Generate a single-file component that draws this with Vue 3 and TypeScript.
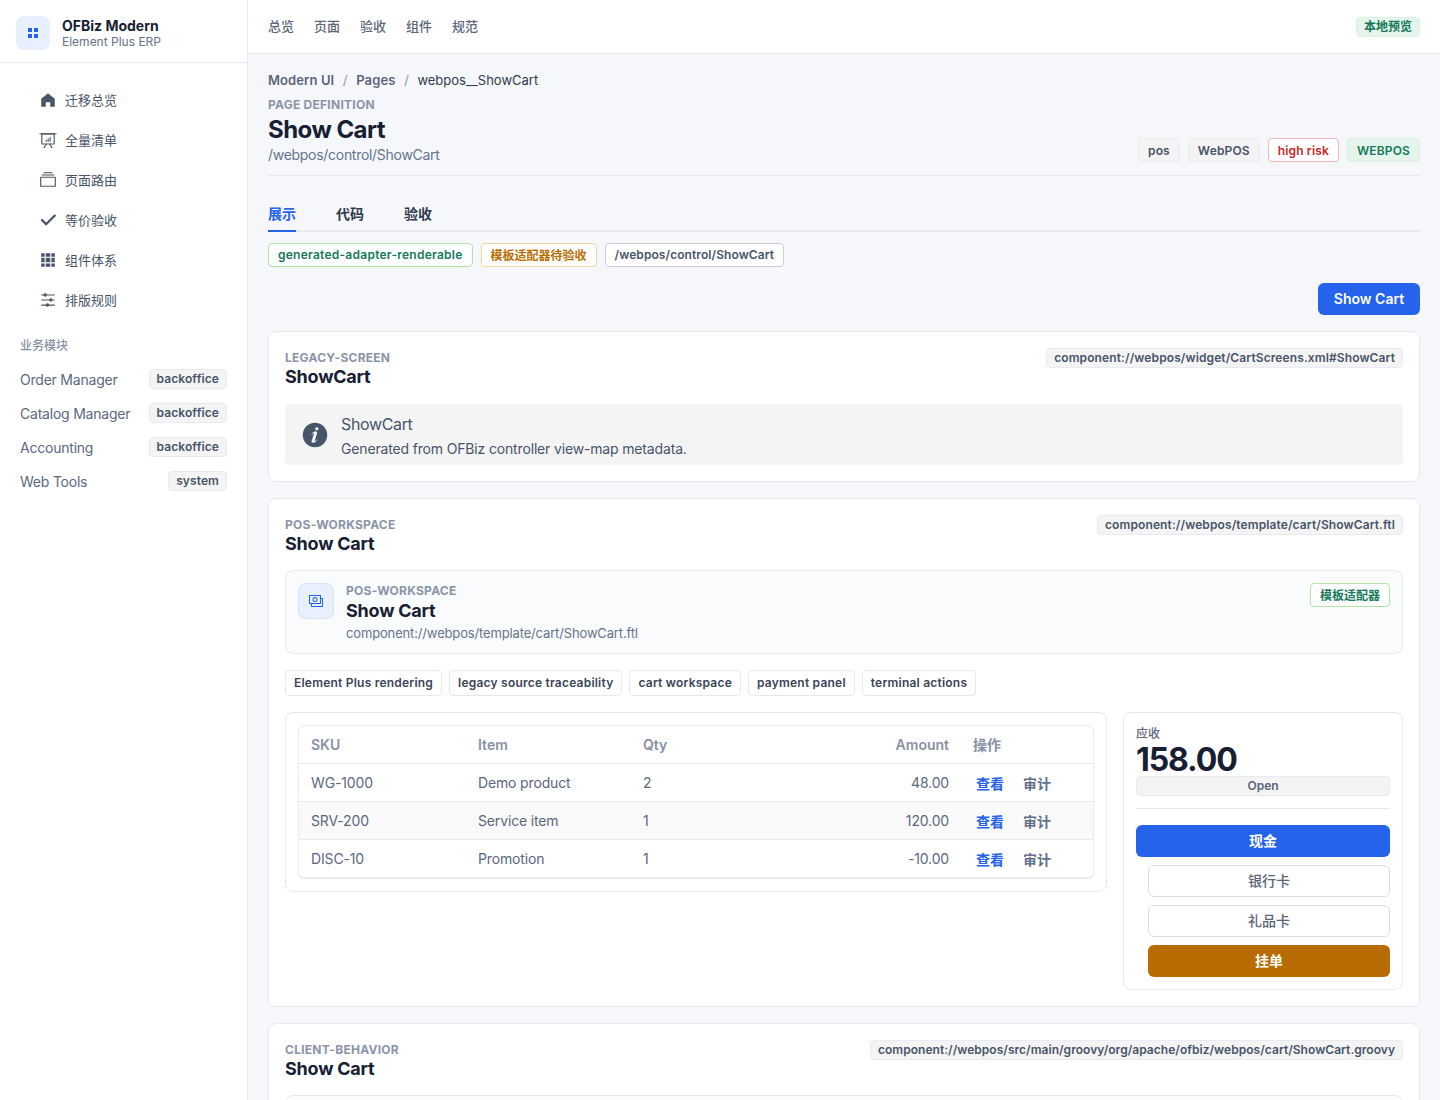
<template>
  <div class="layout">
    <aside class="sidebar">
      <div class="brand">
        <div class="brand-mark">
          <svg viewBox="0 0 12 12" width="12" height="12"><path d="M1 1h4v4H1zM7 1h4v4H7zM1 7h4v4H1zM7 7h4v4H7z" fill="#2563eb" /></svg>
        </div>
        <div>
          <div class="brand-name">OFBiz Modern</div>
          <div class="brand-sub">Element Plus ERP</div>
        </div>
      </div>
      <nav class="menu">
        <a v-for="item in menu" :key="item.label" class="menu-item">
          <svg viewBox="0 0 1024 1024" width="18" height="18" fill="currentColor" :stroke="item.bold ? 'currentColor' : 'none'" :stroke-width="item.bold ? 60 : 0">
            <path v-for="d in item.paths" :key="d" :d="d" />
          </svg>
          <span class="cjk-text">{{ item.label }}</span>
        </a>
      </nav>
      <div class="module-title">业务模块</div>
      <div class="modules">
        <div v-for="mod in modules" :key="mod.name" class="module-row">
          <span class="module-name">{{ mod.name }}</span>
          <span class="module-tag">{{ mod.tag }}</span>
        </div>
      </div>
    </aside>

    <div class="content">
      <header class="topbar">
        <div class="topnav">
          <a v-for="link in topLinks" :key="link" class="cjk-text">{{ link }}</a>
        </div>
        <span class="tag tag-green preview">本地预览</span>
      </header>

      <main class="main">
        <div class="breadcrumb">
          <b>Modern UI</b><i>/</i><b>Pages</b><i>/</i><span>webpos__ShowCart</span>
        </div>
        <div class="page-head">
          <div>
            <div class="eyebrow">PAGE DEFINITION</div>
            <h1>Show Cart</h1>
            <div class="page-path">/webpos/control/ShowCart</div>
          </div>
          <div class="head-tags">
            <span class="tag tag-gray">pos</span>
            <span class="tag tag-gray">WebPOS</span>
            <span class="tag tag-red">high risk</span>
            <span class="tag tag-green">WEBPOS</span>
          </div>
        </div>

        <div class="tabs">
          <a v-for="(tab, i) in tabs" :key="tab" class="tab" :class="{ active: i === 0 }">{{ tab }}</a>
        </div>

        <div class="status-tags">
          <span class="tag status status-green wide">generated-adapter-renderable</span>
          <span class="tag status status-orange">模板适配器待验收</span>
          <span class="tag status status-gray">/webpos/control/ShowCart</span>
        </div>

        <div class="actions">
          <button class="btn btn-primary show-cart">Show Cart</button>
        </div>

        <section class="card">
          <div class="card-head">
            <div>
              <div class="eyebrow">LEGACY-SCREEN</div>
              <h2>ShowCart</h2>
            </div>
            <span class="chip">component://webpos/widget/CartScreens.xml#ShowCart</span>
          </div>
          <div class="alert">
            <svg viewBox="0 0 1024 1024" width="28" height="28" fill="#475569"><path :d="infoPath" /></svg>
            <div class="alert-body">
              <div class="alert-title">ShowCart</div>
              <div class="alert-desc">Generated from OFBiz controller view-map metadata.</div>
            </div>
          </div>
        </section>

        <section class="card">
          <div class="card-head">
            <div>
              <div class="eyebrow">POS-WORKSPACE</div>
              <h2>Show Cart</h2>
            </div>
            <span class="chip">component://webpos/template/cart/ShowCart.ftl</span>
          </div>

          <div class="adapter">
            <div class="adapter-icon">
              <svg viewBox="0 0 1024 1024" width="16" height="16" fill="#2563eb">
                <path v-for="d in moneyPaths" :key="d" :d="d" />
              </svg>
            </div>
            <div class="adapter-text">
              <div class="eyebrow">POS-WORKSPACE</div>
              <div class="adapter-title">Show Cart</div>
              <div class="adapter-path">component://webpos/template/cart/ShowCart.ftl</div>
            </div>
            <span class="tag status status-green adapter-tag">模板适配器</span>
          </div>

          <div class="features">
            <span v-for="f in features" :key="f" class="feature">{{ f }}</span>
          </div>

          <div class="workspace">
            <div class="table-panel">
              <table class="cart-table">
                <colgroup>
                  <col style="width: 167px" />
                  <col style="width: 165px" />
                  <col />
                  <col />
                  <col style="width: 132px" />
                </colgroup>
                <thead>
                  <tr>
                    <th>SKU</th>
                    <th>Item</th>
                    <th>Qty</th>
                    <th class="num">Amount</th>
                    <th><span class="cjk-text">操作</span></th>
                  </tr>
                </thead>
                <tbody>
                  <tr v-for="row in rows" :key="row.sku">
                    <td>{{ row.sku }}</td>
                    <td>{{ row.item }}</td>
                    <td>{{ row.qty }}</td>
                    <td class="num">{{ row.amount }}</td>
                    <td class="ops"><a class="op-view">查看</a><a class="op-audit">审计</a></td>
                  </tr>
                </tbody>
              </table>
            </div>

            <div class="pay-panel">
              <div class="pay-label">应收</div>
              <div class="pay-total">158.00</div>
              <div class="pay-status">Open</div>
              <div class="pay-divider"></div>
              <div class="pay-buttons">
                <button class="btn btn-primary">现金</button>
                <button class="btn btn-plain indent">银行卡</button>
                <button class="btn btn-plain indent">礼品卡</button>
                <button class="btn btn-warn indent">挂单</button>
              </div>
            </div>
          </div>
        </section>

        <section class="card">
          <div class="card-head">
            <div>
              <div class="eyebrow">CLIENT-BEHAVIOR</div>
              <h2>Show Cart</h2>
            </div>
            <span class="chip chip-tight">component://webpos/src/main/groovy/org/apache/ofbiz/webpos/cart/ShowCart.groovy</span>
          </div>
          <div class="adapter behavior"></div>
        </section>
      </main>
    </div>
  </div>
</template>

<script setup lang="ts">
const menu = [
  { label: '迁移总览', paths: ['M512 128 128 447.936V896h255.936V640H640v256h255.936V447.936z'] },
  {
    label: '全量清单',
    paths: [
      'M32 128h960v64H32z',
      'M192 192v512h640V192zm-64-64h768v576a64 64 0 0 1-64 64H192a64 64 0 0 1-64-64z',
      'M322.176 960H248.32l144.64-250.56 55.424 32zm453.888 0h-73.856L576 741.44l55.424-32z',
      'M380 500h64v110h-64zM490 430h64v180h-64zM600 340h64v270h-64z',
    ],
  },
  {
    label: '页面路由',
    paths: ['M128 384v448h768V384zm-32-64h832a32 32 0 0 1 32 32v512a32 32 0 0 1-32 32H96a32 32 0 0 1-32-32V352a32 32 0 0 1 32-32m64-128h704v64H160zm96-128h512v64H256z'],
  },
  {
    label: '等价验收',
    bold: true,
    paths: ['M406.656 706.944 195.84 496.256a32 32 0 1 0-45.248 45.248l256 256 512-512a32 32 0 1 0-45.248-45.248L406.592 706.944z'],
  },
  {
    label: '组件体系',
    paths: ['M640 384v256H384V384zm64 0h192v256H704zm-64 512H384V704h256zm64 0V704h192v192zm-64-768v192H384V128zm64 0h192v192H704zM320 384v256H128V384zm0 512H128V704h192zm0-768v192H128V128z'],
  },
  {
    label: '排版规则',
    paths: ['M389.44 768a96.064 96.064 0 0 1 181.12 0H896v64H570.56a96.064 96.064 0 0 1-181.12 0H128v-64zm192-288a96.064 96.064 0 0 1 181.12 0H896v64H762.56a96.064 96.064 0 0 1-181.12 0H128v-64zm-320-288a96.064 96.064 0 0 1 181.12 0H896v64H442.56a96.064 96.064 0 0 1-181.12 0H128v-64z'],
  },
]

const modules = [
  { name: 'Order Manager', tag: 'backoffice' },
  { name: 'Catalog Manager', tag: 'backoffice' },
  { name: 'Accounting', tag: 'backoffice' },
  { name: 'Web Tools', tag: 'system' },
]

const topLinks = ['总览', '页面', '验收', '组件', '规范']
const tabs = ['展示', '代码', '验收']
const features = ['Element Plus rendering', 'legacy source traceability', 'cart workspace', 'payment panel', 'terminal actions']

const rows = [
  { sku: 'WG-1000', item: 'Demo product', qty: 2, amount: '48.00' },
  { sku: 'SRV-200', item: 'Service item', qty: 1, amount: '120.00' },
  { sku: 'DISC-10', item: 'Promotion', qty: 1, amount: '-10.00' },
]

const infoPath =
  'M512 64a448 448 0 1 1 0 896.064A448 448 0 0 1 512 64m67.2 275.072c33.28 0 60.288-23.104 60.288-57.344s-27.072-57.344-60.288-57.344c-33.28 0-60.16 23.104-60.16 57.344s26.88 57.344 60.16 57.344M590.912 699.2c0-6.848 2.368-24.64 1.024-34.752l-52.608 60.544c-10.88 11.456-24.512 19.392-30.912 17.28a12.992 12.992 0 0 1-8.256-14.72l87.68-276.992c7.168-35.136-12.544-67.2-54.336-71.296-44.096 0-108.992 44.736-148.48 101.504 0 6.784-1.28 23.68.064 33.792l52.544-60.608c10.88-11.328 23.552-19.328 29.952-17.152a12.8 12.8 0 0 1 7.808 16.128L388.48 728.576c-10.048 30.72 8.96 60.8 55.104 67.968 67.84 0 107.904-43.648 147.456-100.416z'

const moneyPaths = [
  'M256 640v192h640V384H768v-64h150.976c14.272 0 19.456 1.472 24.64 4.288a29.056 29.056 0 0 1 12.16 12.096c2.752 5.184 4.224 10.368 4.224 24.64v493.952c0 14.272-1.472 19.456-4.288 24.64a29.056 29.056 0 0 1-12.096 12.16c-5.184 2.752-10.368 4.224-24.64 4.224H233.024c-14.272 0-19.456-1.472-24.64-4.288a29.056 29.056 0 0 1-12.16-12.096c-2.688-5.184-4.224-10.368-4.224-24.576V640z',
  'M768 192H128v448h640zm64-22.976v493.952c0 14.272-1.472 19.456-4.288 24.64a29.056 29.056 0 0 1-12.096 12.16c-5.184 2.752-10.368 4.224-24.64 4.224H105.024c-14.272 0-19.456-1.472-24.64-4.288a29.056 29.056 0 0 1-12.16-12.096C65.536 682.432 64 677.248 64 663.04V169.024c0-14.272 1.472-19.456 4.288-24.64a29.056 29.056 0 0 1 12.096-12.16C85.568 129.536 90.752 128 104.96 128h685.952c14.272 0 19.456 1.472 24.64 4.288a29.056 29.056 0 0 1 12.16 12.096c2.752 5.184 4.224 10.368 4.224 24.64z',
  'M448 576a160 160 0 1 1 0-320 160 160 0 0 1 0 320m0-64a96 96 0 1 0 0-192 96 96 0 0 0 0 192',
]
</script>

<style>
html,
body {
  margin: 0;
  background: #f6f7fb;
}
</style>

<style scoped>
.layout {
  display: flex;
  height: 1100px;
  overflow: hidden;
  font-family: Inter, "Noto Sans CJK SC", sans-serif;
  color: #172033;
  background: #f6f7fb;
}

.cjk-text {
  display: block;
  padding-bottom: 2px;
}

/* sidebar */
.sidebar {
  width: 248px;
  flex-shrink: 0;
  box-sizing: border-box;
  background: #fff;
  border-right: 1px solid #e6e9f0;
}

.brand {
  display: flex;
  align-items: center;
  gap: 12px;
  height: 63px;
  box-sizing: border-box;
  padding: 4px 16px 0;
  border-bottom: 1px solid #e6e9f0;
}

.brand-mark {
  width: 34px;
  height: 34px;
  display: flex;
  align-items: center;
  justify-content: center;
  border-radius: 8px;
  background: #e8effe;
}

.brand-name {
  font-size: 14px;
  line-height: 18px;
  font-weight: 700;
}

.brand-sub {
  font-size: 12px;
  line-height: 14px;
  color: #64748b;
}

.menu {
  padding-top: 17px;
}

.menu-item {
  display: flex;
  align-items: center;
  gap: 8px;
  height: 40px;
  padding-left: 39px;
  font-size: 13px;
  color: #475569;
}

.module-title {
  margin-top: 17px;
  padding-left: 20px;
  font-size: 12px;
  line-height: 18px;
  font-weight: 500;
  color: #8791a5;
}

.modules {
  margin-top: 7px;
  padding: 0 20px;
}

.module-row {
  display: flex;
  align-items: center;
  justify-content: space-between;
  height: 34px;
  font-size: 14px;
  color: #5b6880;
}

.module-name {
  letter-spacing: -0.22px;
}

.module-tag {
  height: 20px;
  box-sizing: border-box;
  padding: 0 7px;
  border: 1px solid #e9ebf0;
  border-radius: 4px;
  background: #f4f4f5;
  font-size: 12px;
  line-height: 17px;
  font-weight: 600;
  letter-spacing: 0.1px;
  color: #475569;
}

/* top bar */
.content {
  flex: 1;
  min-width: 0;
}

.topbar {
  display: flex;
  align-items: center;
  justify-content: space-between;
  height: 54px;
  box-sizing: border-box;
  padding: 0 20px;
  background: #fff;
  border-bottom: 1px solid #e6e9f0;
}

.topnav {
  display: flex;
  gap: 20px;
  font-size: 13px;
  font-weight: 500;
  color: #5b6578;
}

.tag {
  display: inline-flex;
  align-items: center;
  box-sizing: border-box;
  height: 24px;
  padding: 0 9px;
  border: 1px solid transparent;
  border-radius: 4px;
  font-size: 12px;
  font-weight: 600;
  letter-spacing: 0.15px;
  white-space: nowrap;
}

.tag-gray {
  background: #f4f4f5;
  border-color: #e9ebf0;
  color: #475569;
}

.tag-green {
  background: #e6f5ec;
  border-color: #dcf0e3;
  color: #15795a;
}

.tag-red {
  background: #fff;
  border-color: #f8b4b4;
  color: #c62828;
}

.preview {
  height: 20px;
  padding: 0 7px 2px;
  letter-spacing: 0;
}

/* page header */
.main {
  padding: 0 20px;
}

.breadcrumb {
  display: flex;
  align-items: center;
  height: 20px;
  margin-top: 16px;
  font-size: 13px;
  color: #303a4d;
}

.breadcrumb b {
  font-weight: 600;
  letter-spacing: 0.1px;
  color: #5b6578;
}

.breadcrumb i {
  margin: 0 8.5px;
  font-style: normal;
  font-weight: 600;
  color: #a8afbd;
}

.eyebrow {
  font-size: 12px;
  line-height: 18px;
  font-weight: 700;
  letter-spacing: 0.25px;
  color: #8b95a8;
}

.page-head {
  display: flex;
  align-items: flex-end;
  justify-content: space-between;
  margin-top: 6px;
  padding-bottom: 11px;
  border-bottom: 1px solid #e6e9f0;
}

h1 {
  margin: 0;
  font-size: 24px;
  line-height: 32px;
  font-weight: 700;
  letter-spacing: -0.55px;
}

.page-path {
  font-size: 14px;
  line-height: 18px;
  letter-spacing: -0.29px;
  color: #64748b;
}

.head-tags {
  display: flex;
  gap: 8px;
  margin-bottom: 2px;
}

.tabs {
  display: flex;
  gap: 40px;
  margin-top: 22px;
  border-bottom: 2px solid #e6e9f0;
}

.tab {
  height: 32px;
  margin-bottom: -2px;
  border-bottom: 2px solid transparent;
  font-size: 14px;
  line-height: 32px;
  font-weight: 700;
  color: #303a4d;
}

.tab.active {
  color: #2563eb;
  border-bottom-color: #2563eb;
}

.status-tags {
  display: flex;
  gap: 8px;
  margin-top: 11px;
}

.status {
  padding-bottom: 2px;
  background: #fff;
}

.status.wide {
  letter-spacing: 0.25px;
}

.status-green {
  border-color: #b3e2a8;
  color: #15795a;
}

.status-orange {
  border-color: #f5d6a2;
  color: #b86e00;
  letter-spacing: 0;
}

.status-gray {
  border-color: #c9ced8;
  color: #475569;
  letter-spacing: 0.08px;
}

.actions {
  display: flex;
  justify-content: flex-end;
  margin: 16px 0;
}

.btn {
  height: 32px;
  padding: 0 0 2px;
  border: 1px solid transparent;
  border-radius: 6px;
  font-family: inherit;
  font-size: 14px;
  font-weight: 600;
  cursor: pointer;
}

.btn-primary {
  background: #2563eb;
  color: #fff;
}

.show-cart {
  width: 102px;
}

.btn-plain {
  background: #fff;
  border-color: #d9dce6;
  color: #5b6578;
  font-weight: 500;
}

.btn-warn {
  background: #b86b00;
  color: #fff;
}

/* cards */
.card {
  margin-bottom: 16px;
  padding: 16px;
  border: 1px solid #e6e9f0;
  border-radius: 8px;
  background: #fff;
}

.card-head {
  display: flex;
  align-items: flex-start;
  justify-content: space-between;
  margin-bottom: 16px;
}

.card-head .eyebrow {
  padding-top: 1px;
}

h2 {
  margin: 0;
  padding-bottom: 2px;
  font-size: 18px;
  line-height: 19px;
  font-weight: 700;
  letter-spacing: -0.22px;
}

.chip {
  height: 20px;
  box-sizing: border-box;
  padding: 0 7px;
  border: 1px solid #e9ebf0;
  border-radius: 4px;
  background: #f4f4f5;
  font-size: 12px;
  line-height: 18px;
  font-weight: 600;
  letter-spacing: 0.11px;
  color: #475569;
}

.chip-tight {
  letter-spacing: 0.04px;
}

.alert {
  display: flex;
  align-items: center;
  gap: 12px;
  height: 61px;
  padding: 0 16px;
  box-sizing: border-box;
  border-radius: 6px;
  background: #f4f4f5;
}

.alert-body {
  padding-top: 2px;
}

.alert-title {
  font-size: 16px;
  line-height: 24px;
  letter-spacing: -0.35px;
  color: #475569;
}

.alert-desc {
  font-size: 14px;
  line-height: 22px;
  margin-top: 2px;
  letter-spacing: -0.16px;
  color: #475569;
}

.adapter {
  display: flex;
  gap: 12px;
  margin-top: -1px;
  padding: 12px;
  border: 1px solid #e6e9f0;
  border-radius: 8px;
  background: #fafbfd;
}

.behavior {
  height: 80px;
}

.adapter-icon {
  width: 36px;
  height: 36px;
  box-sizing: border-box;
  display: flex;
  align-items: center;
  justify-content: center;
  border: 1px solid #d8e3fb;
  border-radius: 8px;
  background: #e8effe;
}

.adapter-text {
  flex: 1;
  padding-top: 1px;
}

.adapter-text .eyebrow {
  line-height: 14px;
}

.adapter-title {
  margin-top: 1px;
  font-size: 18px;
  line-height: 24px;
  font-weight: 700;
  letter-spacing: -0.22px;
}

.adapter-path {
  margin-top: 2px;
  font-size: 13px;
  line-height: 16px;
  letter-spacing: -0.15px;
  color: #64748b;
}

.features {
  display: flex;
  gap: 7px;
  margin: 16px 0;
}

.feature {
  height: 26px;
  box-sizing: border-box;
  padding: 0 8px;
  border: 1px solid #e6e9f0;
  border-radius: 4px;
  font-size: 12px;
  line-height: 24px;
  font-weight: 600;
  letter-spacing: 0.22px;
  color: #3a4558;
}

.workspace {
  display: grid;
  grid-template-columns: 1fr 280px;
  gap: 16px;
  align-items: start;
}

.table-panel {
  padding: 12px;
  border: 1px solid #e6e9f0;
  border-radius: 8px;
}

.cart-table {
  width: 100%;
  table-layout: fixed;
  border-collapse: separate;
  border-spacing: 0;
  border: 1px solid #e6e9f0;
  border-bottom-width: 2px;
  border-radius: 6px;
  font-size: 14px;
  color: #5b6880;
}

.cart-table th,
.cart-table td {
  height: 38px;
  box-sizing: border-box;
  padding: 0 12px;
  text-align: left;
  border-bottom: 1px solid #e6e9f0;
}

.cart-table td {
  letter-spacing: -0.15px;
}

.cart-table th {
  font-weight: 600;
  color: #8791a5;
}

.cart-table tbody tr:nth-child(2) td {
  background: #fafafa;
}

.cart-table tbody tr:last-child td {
  height: 37px;
  border-bottom: none;
}

.cart-table .num {
  text-align: right;
}

.cart-table .ops {
  font-weight: 600;
  letter-spacing: 0;
}

.op-view {
  margin-left: 3px;
  color: #2563eb;
}

.op-audit {
  margin-left: 19px;
  color: #64708a;
}

.pay-panel {
  padding: 12px;
  border: 1px solid #e6e9f0;
  border-radius: 8px;
}

.pay-label {
  font-size: 12px;
  line-height: 17px;
  font-weight: 500;
  color: #5b6578;
}

.pay-total {
  padding-top: 2px;
  font-size: 32px;
  line-height: 32px;
  font-weight: 700;
  letter-spacing: -1.1px;
}

.pay-status {
  height: 20px;
  box-sizing: border-box;
  border: 1px solid #e9ebf0;
  border-radius: 4px;
  background: #f4f4f5;
  font-size: 12px;
  line-height: 18px;
  font-weight: 600;
  text-align: center;
  color: #5b6578;
}

.pay-divider {
  height: 1px;
  margin: 12px 0 16px;
  background: #e6e9f0;
}

.pay-buttons {
  display: flex;
  flex-direction: column;
  gap: 8px;
}

.indent {
  margin-left: 12px;
}

.adapter-tag {
  flex-shrink: 0;
  letter-spacing: 0;
}
</style>
